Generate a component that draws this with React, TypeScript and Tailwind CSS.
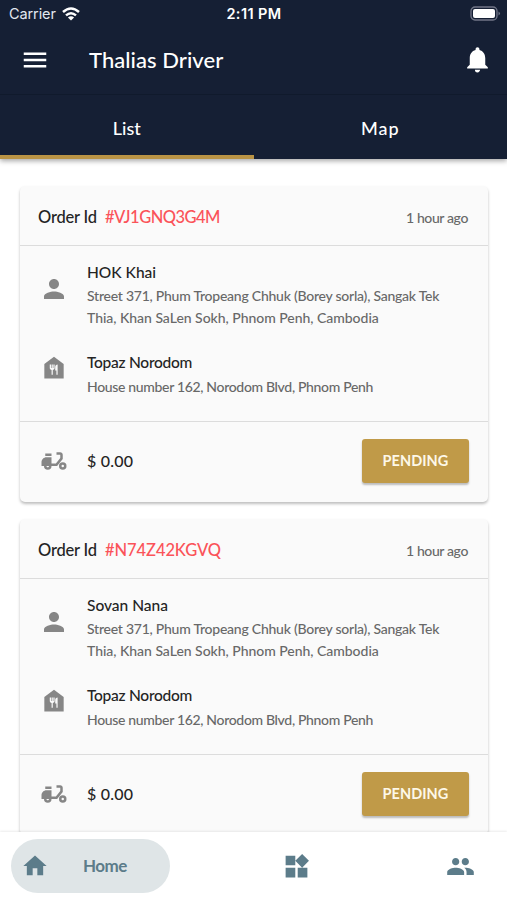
import { MdFoodBank, MdHome, MdMenu, MdNotifications, MdPeople, MdPerson, MdWidgets } from 'react-icons/md'

const orders = [
  {
    id: '#VJ1GNQ3G4M',
    idClass: 'tracking-[-0.53px]',
    time: '1 hour ago',
    customer: 'HOK Khai',
    address: ['Street 371, Phum Tropeang Chhuk (Borey sorla), Sangak Tek', 'Thia, Khan SaLen Sokh, Phnom Penh, Cambodia'],
    restaurant: 'Topaz Norodom',
    restaurantAddress: 'House number 162, Norodom Blvd, Phnom Penh',
    price: '$ 0.00',
    status: 'PENDING',
  },
  {
    id: '#N74Z42KGVQ',
    idClass: 'tracking-[-0.08px]',
    time: '1 hour ago',
    customer: 'Sovan Nana',
    address: ['Street 371, Phum Tropeang Chhuk (Borey sorla), Sangak Tek', 'Thia, Khan SaLen Sokh, Phnom Penh, Cambodia'],
    restaurant: 'Topaz Norodom',
    restaurantAddress: 'House number 162, Norodom Blvd, Phnom Penh',
    price: '$ 0.00',
    status: 'PENDING',
  },
]

const MopedIcon = () => (
  <svg viewBox="0 0 24 24" className="h-[30px] w-[30px]" fill="currentColor">
    <path d="M19 7c0-1.1-.9-2-2-2h-3v2h3v2.65L13.5 14H10V9H6c-2.2 0-4 1.8-4 4v3h2a3 3 0 0 0 6 0h4.5L19 10.35V7ZM7 17c-.55 0-1-.45-1-1h2c0 .55-.45 1-1 1Z" />
    <path d="M5 6h5v2H5zM19 13a3 3 0 1 0 0 6 3 3 0 0 0 0-6Zm0 4a1 1 0 1 1 0-2 1 1 0 0 1 0 2Z" />
  </svg>
)

const StatusBar = () => (
  <div className="grid h-[27px] grid-cols-3 items-center pl-[9px] pr-[6px] font-['Inter',sans-serif] text-white">
    <div className="flex items-center gap-[6px] text-slate-200">
      <span className="w-[47px] text-[14.5px] tracking-[-0.1px]">Carrier</span>
      <svg viewBox="0 0 18 14" className="h-[14px] w-[18px]" fill="none" stroke="white" strokeWidth="2.5">
        <path d="M1 5Q9-2 17 5M4 8.4Q9 4 14 8.4" />
        <path d="M9 13.5 5.9 10.5Q9 7.8 12.1 10.5Z" fill="white" stroke="none" />
      </svg>
    </div>
    <span className="pr-[2px] text-center text-[14.5px] font-semibold tracking-[0.4px]">2:11 PM</span>
    <svg viewBox="0 0 31 15" className="h-[15px] w-[31px] justify-self-end" fill="none">
      <rect x="1" y="1" width="26" height="13" rx="4" stroke="#717687" strokeWidth="1.3" />
      <rect x="3" y="3" width="22" height="9" rx="2" fill="white" />
      <path d="M28.5 5.5q3 2 0 4z" fill="#717687" />
    </svg>
  </div>
)

const OrderCard = ({ order }: { order: (typeof orders)[number] }) => (
  <article className="h-[316px] shrink-0 rounded-[5px] bg-[#fafafa] shadow-[0_2px_3px_rgba(0,0,0,0.26)]">
    <div className="flex h-[60px] items-center justify-between border-b border-[#dcdcdc] pl-[18px] pr-[20px] pt-[3px]">
      <div className="flex items-center gap-[8px] whitespace-nowrap text-[16.5px] font-medium">
        <span className="w-[59px] tracking-[-0.2px] text-[#242424]">Order Id</span>
        <span className={`text-[#fa5359] ${order.idClass}`}>{order.id}</span>
      </div>
      <span className="text-[14px] font-medium tracking-[-0.38px] text-[#686868]">{order.time}</span>
    </div>

    <div className="h-[176px] border-b border-[#dcdcdc] pl-[19px] pt-[14px]">
      <div className="flex gap-[18px]">
        <MdPerson className="mt-[14px] h-[30px] w-[30px] shrink-0 text-[#868686]" />
        <div className="whitespace-nowrap">
          <p className="h-[25px] text-[15.5px] font-medium leading-[24px] text-[#242424]">{order.customer}</p>
          <p className="text-[14px] font-medium leading-[22px] text-[#686868]">
            <span className="tracking-[-0.24px]">{order.address[0]}</span>
            <br />
            <span className="tracking-[-0.03px]">{order.address[1]}</span>
          </p>
        </div>
      </div>
      <div className="mt-[21px] flex gap-[18px]">
        <MdFoodBank className="mt-[3px] h-[29px] w-[30px] shrink-0 text-[#868686]" />
        <div className="whitespace-nowrap">
          <p className="h-[25px] text-[15.5px] font-medium leading-[25px] tracking-[-0.26px] text-[#242424]">{order.restaurant}</p>
          <p className="text-[14px] font-medium leading-[24px] tracking-[-0.33px] text-[#686868]">{order.restaurantAddress}</p>
        </div>
      </div>
    </div>

    <div className="flex h-[78px] items-center pl-[19px] pr-[19px]">
      <div className="text-[#868686]">
        <MopedIcon />
      </div>
      <span className="ml-[18px] pb-px text-[16px] font-medium tracking-[0.2px] text-[#242424]">{order.price}</span>
      <button className="ml-auto h-[44px] w-[107px] rounded-[3px] bg-[#c09a48] pb-px text-[14.5px] font-bold tracking-[0.05px] text-[#fdf8e8] shadow-[0_2px_2px_rgba(0,0,0,0.25)]">
        {order.status}
      </button>
    </div>
  </article>
)

const App = () => {
  return (
    <div className="flex h-[900px] w-[507px] flex-col overflow-hidden bg-white font-['Lato',sans-serif]">
      <header className="relative z-10 shrink-0 bg-[#151f34] text-white shadow-[0_2px_5px_rgba(0,0,0,0.35)]">
        <StatusBar />
        <div className="flex h-[68px] items-center border-b border-[#101a2c] pb-[2px] pl-[20px] pr-[14px]">
          <MdMenu className="h-[30px] w-[30px]" />
          <h1 className="ml-[39px] text-[22px] font-medium tracking-[0.05px]">Thalias Driver</h1>
          <MdNotifications className="ml-auto h-[31px] w-[31px]" />
        </div>
        <nav className="grid h-[64px] grid-cols-2 text-[18px] font-medium">
          <button className="border-b-4 border-[#b99345] pt-[6px]">List</button>
          <button className="pt-[2px] tracking-[0.9px]">Map</button>
        </nav>
      </header>

      <main className="flex min-h-0 flex-1 flex-col gap-[17px] overflow-hidden pl-[20px] pr-[19px] pt-[27px]">
        {orders.map((order) => (
          <OrderCard key={order.id} order={order} />
        ))}
      </main>

      <footer className="relative z-10 flex h-[68px] shrink-0 items-center bg-white pl-[11px] pr-[32px] text-[#5c7c8a] shadow-[0_-1px_2px_rgba(0,0,0,0.08)]">
        <button className="flex h-[54px] w-[159px] items-center rounded-full bg-[#dfe5e7] pl-[10px]">
          <MdHome className="h-[28px] w-[28px]" />
          <span className="ml-[34px] text-[17px] font-bold tracking-[-0.5px]">Home</span>
        </button>
        <MdWidgets className="ml-[112px] h-[29px] w-[29px]" />
        <MdPeople className="ml-auto h-[29px] w-[29px]" />
      </footer>
    </div>
  )
}

export default App
